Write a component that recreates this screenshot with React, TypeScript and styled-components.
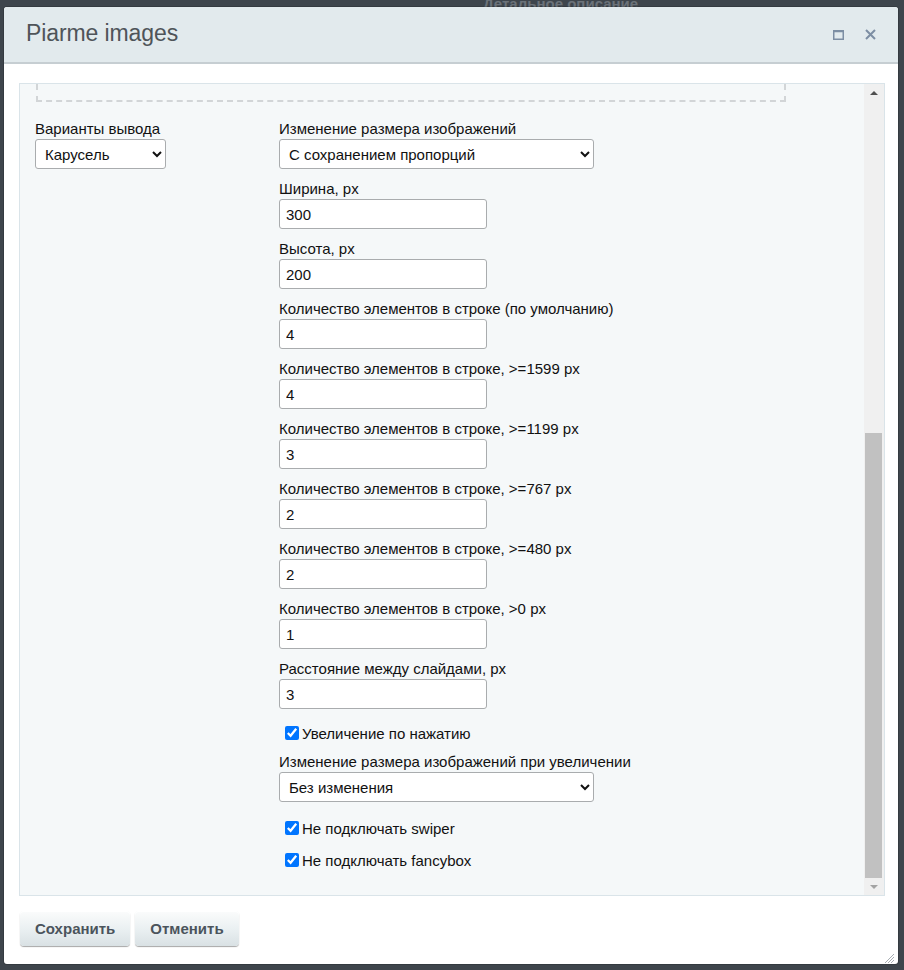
import React from "react";
import styled, { createGlobalStyle } from "styled-components";

const GlobalStyle = createGlobalStyle`
  html, body {
    margin: 0;
    padding: 0;
    background: #3e454c;
  }
  body {
    font-family: "Liberation Sans", Arial, sans-serif;
  }
`;

const Page = styled.div`
  position: relative;
  width: 904px;
  height: 970px;
  box-sizing: border-box;
  padding: 7px 6px 6px 4px;
  overflow: hidden;
`;

const BackdropText = styled.div`
  position: absolute;
  left: 483px;
  top: -5px;
  font-size: 15px;
  font-weight: bold;
  color: #6b7279;
`;

const Dialog = styled.div`
  position: relative;
  height: 957px;
  background: #fff;
  border-radius: 3px;
  display: flex;
  flex-direction: column;
  box-shadow: 0 0 0 1px rgba(0, 0, 0, 0.15);
  overflow: hidden;
`;

const Header = styled.div`
  height: 55px;
  flex: none;
  display: flex;
  align-items: center;
  justify-content: space-between;
  padding: 0 22px 0 22px;
  background: #e2eaed;
  border-bottom: 2px solid #c6ced2;
`;

const Title = styled.h1`
  margin: 0;
  font-size: 23px;
  font-weight: normal;
  color: #4f5459;
  letter-spacing: -0.1px;
  padding-bottom: 3px;
`;

const HeaderIcons = styled.div`
  display: flex;
  align-items: center;
  gap: 20px;
`;

const IconButton = styled.span`
  display: inline-flex;
  width: 12px;
  height: 12px;
  align-items: center;
  justify-content: center;
`;

const Body = styled.div`
  flex: 1;
  display: flex;
  flex-direction: column;
  padding: 19px 13px 0 15px;
  min-height: 0;
`;

const Panel = styled.div`
  height: 811px;
  display: flex;
  background: #f5f8f9;
  border: 1px solid #dae4e9;
`;

const Content = styled.div`
  flex: 1;
  overflow: hidden;
  padding: 0 15px 0 15px;
`;

const DashedBox = styled.div`
  width: 746px;
  height: 16px;
  margin-left: 1px;
  border: 2px dashed #d2d5d7;
  border-top: none;
`;

const Columns = styled.div`
  display: grid;
  grid-template-columns: 244px 1fr;
  margin-top: 17px;
`;

const Column = styled.div`
  display: flex;
  flex-direction: column;
`;

const Field = styled.div`
  display: flex;
  flex-direction: column;
  margin-bottom: 10px;
`;

const Label = styled.label`
  font-size: 15px;
  line-height: 20px;
  color: #111;
`;

const Select = styled.select<{ $width: number }>`
  width: ${(p) => p.$width}px;
  height: 30px;
  box-sizing: border-box;
  border: 1px solid #a9acae;
  border-radius: 3px;
  background: #fff;
  font-family: "Liberation Sans", Arial, sans-serif;
  font-size: 15px;
  color: #111;
  padding: 0 4px 0 5px;
`;

const Input = styled.input`
  width: 208px;
  height: 30px;
  box-sizing: border-box;
  border: 1px solid #a9acae;
  border-radius: 3px;
  background: #fff;
  font-family: "Liberation Sans", Arial, sans-serif;
  font-size: 15px;
  color: #111;
  padding: 0 6px;
  outline: none;
`;

const CheckRow = styled.label<{ $gap: number }>`
  display: flex;
  align-items: center;
  height: 20px;
  margin: ${(p) => p.$gap}px 0 9px 0;
  font-size: 15px;
  color: #111;
`;

const Check = styled.input`
  width: 14px;
  height: 14px;
  margin: 0 3px 0 6px;
  accent-color: #0075ff;
`;

const Scrollbar = styled.div`
  width: 20px;
  flex: none;
  display: flex;
  flex-direction: column;
  background: #f0f0f0;
`;

const ScrollArrow = styled.div<{ $down?: boolean }>`
  height: 17px;
  flex: none;
  display: flex;
  align-items: center;
  justify-content: center;
  &::before {
    content: "";
    width: 0;
    height: 0;
    border-left: 4px solid transparent;
    border-right: 4px solid transparent;
    ${(p) =>
      p.$down
        ? "border-top: 4px solid #a3a3a3;"
        : "border-bottom: 4px solid #505050;"}
  }
`;

const ScrollTrack = styled.div`
  flex: 1;
  display: flex;
  flex-direction: column;
  justify-content: flex-end;
  padding: 0 2px 0 1px;
`;

const ScrollThumb = styled.div`
  height: 445px;
  background: #c1c1c1;
`;

const Footer = styled.div`
  display: flex;
  gap: 5px;
  padding: 15px 0 0 1px;
`;

const Button = styled.button`
  height: 35px;
  padding: 0 15px;
  border: none;
  border-radius: 4px;
  background: linear-gradient(to bottom, #fbfcfc 0%, #e9eff1 55%, #d9e1e4 100%);
  box-shadow: 0 1px 1px rgba(0, 0, 0, 0.35), inset 0 1px 0 #fff;
  font-family: "Liberation Sans", Arial, sans-serif;
  font-size: 15px;
  font-weight: bold;
  color: #4b545c;
`;

const Grip = styled.div`
  position: absolute;
  right: 3px;
  bottom: 2px;
  width: 12px;
  height: 12px;
`;

const fields = [
  { label: "Ширина, px", value: "300" },
  { label: "Высота, px", value: "200" },
  { label: "Количество элементов в строке (по умолчанию)", value: "4" },
  { label: "Количество элементов в строке, >=1599 px", value: "4" },
  { label: "Количество элементов в строке, >=1199 px", value: "3" },
  { label: "Количество элементов в строке, >=767 px", value: "2" },
  { label: "Количество элементов в строке, >=480 px", value: "2" },
  { label: "Количество элементов в строке, >0 px", value: "1" },
  { label: "Расстояние между слайдами, px", value: "3" },
];

export default function App() {
  return (
    <Page>
      <GlobalStyle />
      <BackdropText>Детальное описание</BackdropText>
      <Dialog>
        <Header>
          <Title>Piarme images</Title>
          <HeaderIcons>
            <IconButton>
              <svg width="11" height="10" viewBox="0 0 11 10">
                <rect x="0.75" y="0.75" width="9.5" height="8.5" fill="none" stroke="#7d8ea3" strokeWidth="1.5" />
                <line x1="0.75" y1="1.5" x2="10.25" y2="1.5" stroke="#7d8ea3" strokeWidth="1.5" />
              </svg>
            </IconButton>
            <IconButton>
              <svg width="11" height="11" viewBox="0 0 11 11">
                <path d="M1 1 L10 10 M10 1 L1 10" stroke="#7d8ea3" strokeWidth="2" />
              </svg>
            </IconButton>
          </HeaderIcons>
        </Header>
        <Body>
          <Panel>
            <Content>
              <DashedBox />
              <Columns>
                <Column>
                  <Field>
                    <Label>Варианты вывода</Label>
                    <Select $width={131} defaultValue="carousel">
                      <option value="carousel">Карусель</option>
                    </Select>
                  </Field>
                </Column>
                <Column>
                  <Field>
                    <Label>Изменение размера изображений</Label>
                    <Select $width={315} defaultValue="prop">
                      <option value="prop">С сохранением пропорций</option>
                    </Select>
                  </Field>
                  {fields.map((f) => (
                    <Field key={f.label}>
                      <Label>{f.label}</Label>
                      <Input defaultValue={f.value} />
                    </Field>
                  ))}
                  <CheckRow $gap={4}>
                    <Check type="checkbox" defaultChecked />
                    Увеличение по нажатию
                  </CheckRow>
                  <Field>
                    <Label>Изменение размера изображений при увеличении</Label>
                    <Select $width={315} defaultValue="none">
                      <option value="none">Без изменения</option>
                    </Select>
                  </Field>
                  <CheckRow $gap={6}>
                    <Check type="checkbox" defaultChecked />
                    Не подключать swiper
                  </CheckRow>
                  <CheckRow $gap={3}>
                    <Check type="checkbox" defaultChecked />
                    Не подключать fancybox
                  </CheckRow>
                </Column>
              </Columns>
            </Content>
            <Scrollbar>
              <ScrollArrow />
              <ScrollTrack>
                <ScrollThumb />
              </ScrollTrack>
              <ScrollArrow $down />
            </Scrollbar>
          </Panel>
          <Footer>
            <Button>Сохранить</Button>
            <Button>Отменить</Button>
          </Footer>
        </Body>
        <Grip>
          <svg width="12" height="12" viewBox="0 0 12 12">
            <path d="M11 2 L2 11 M11 5 L5 11 M11 8 L8 11" stroke="#a8aeb3" strokeWidth="1" />
          </svg>
        </Grip>
      </Dialog>
    </Page>
  );
}
